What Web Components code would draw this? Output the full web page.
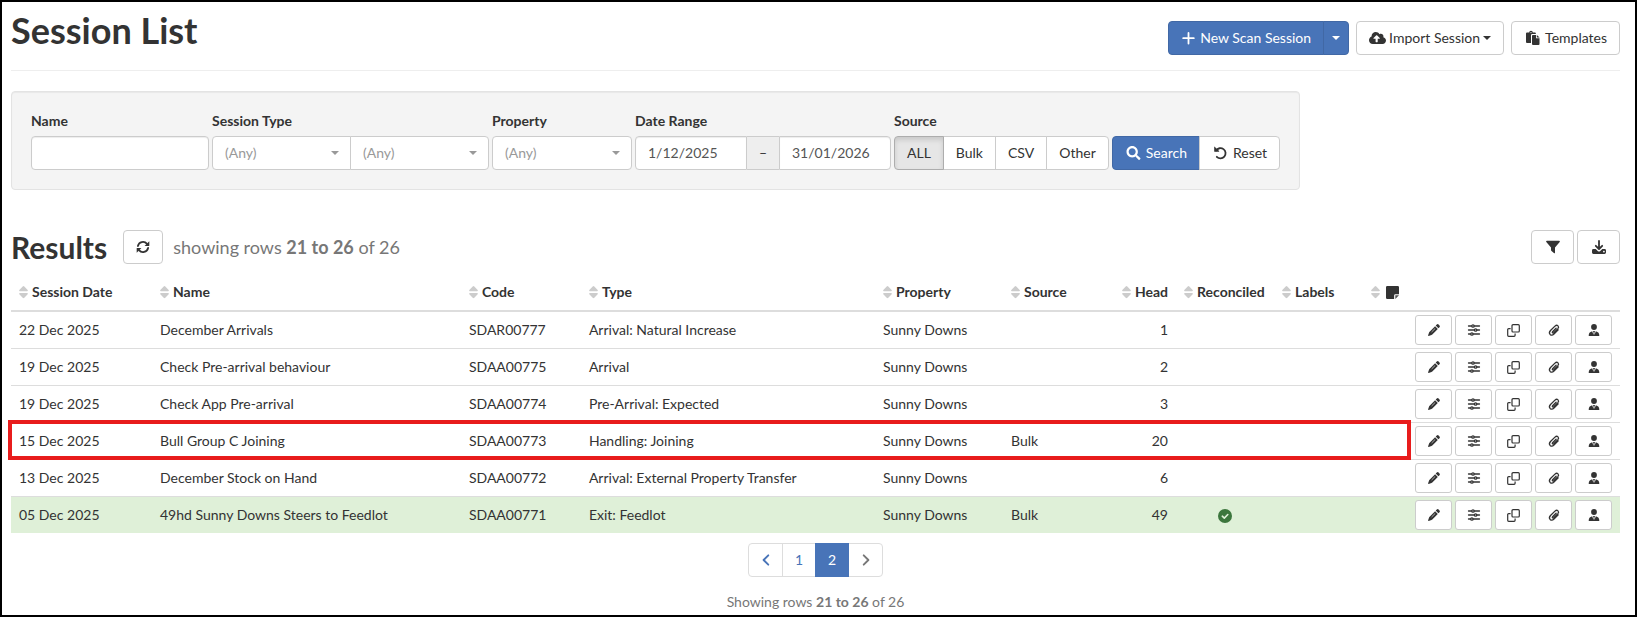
<!DOCTYPE html>
<html lang="en">
<head>
<meta charset="utf-8">
<meta name="viewport" content="width=device-width, initial-scale=1">
<title>Session List</title>
<style>
  body {
    margin: 0;
    font: 14px/20px Lato, "Liberation Sans", sans-serif;
    color: #333;
    background: #fff;
  }
</style>
</head>
<body>
<session-page>
  <page-header>
    Session List
    <button-group slot="actions">
      <ui-button variant="primary" edge="left"><ui-icon name="plus"></ui-icon>New Scan Session</ui-button>
      <ui-button variant="primary" edge="right" size="slim" label="More scan options"><ui-icon name="caret"></ui-icon></ui-button>
    </button-group>
    <ui-button slot="actions" tight><ui-icon name="cloud"></ui-icon>Import Session<ui-icon name="caret"></ui-icon></ui-button>
    <ui-button slot="actions"><ui-icon name="paste"></ui-icon>Templates</ui-button>
  </page-header>
  <filter-panel></filter-panel>
  <results-bar from="21" to="26" total="26"></results-bar>
  <session-table></session-table>
  <page-nav pages="2" current="2"></page-nav>
  <row-count from="21" to="26" total="26">Showing</row-count>
</session-page>

<script>
(() => {
  // [width, height, viewBox, markup]
  const ICONS = {
    plus: [15, 14, '1 0 15 14', '<path d="M8.500 2v10.500M3.200 7.200h10.600" fill="none" stroke="currentColor" stroke-width="1.800" stroke-linecap="round"/>'],
    caret: [8, 4, '0 0 8 4', '<path d="M0 0h8L4 4z"/>'],
    cloud: [17, 14, '0 0 640 512', '<path fill-rule="evenodd" d="M537.600 226.600c4.100-10.700 6.400-22.400 6.400-34.600 0-53-43-96-96-96-19.700 0-38.100 6-53.300 16.200C367 64.200 315.300 32 256 32c-88.400 0-160 71.600-160 160 0 2.700.1 5.400.2 8.100C40.200 219.800 0 273.200 0 336c0 79.500 64.500 144 144 144h368c70.700 0 128-57.300 128-128 0-61.900-44-113.600-102.400-125.400zM393.400 288H328v112c0 8.800-7.200 16-16 16h-48c-8.800 0-16-7.200-16-16V288h-65.400c-14.300 0-21.400-17.200-11.300-27.300l105.400-105.400c6.200-6.200 16.400-6.200 22.600 0l105.400 105.400c10.100 10.100 2.900 27.300-11.300 27.300z"/>'],
    paste: [17, 14, '0 0 17 14', '<path d="M3 1.500h2.200a1.800 1.800 0 0 1 3.600 0H11q.8 0 .8.800V3H8.200Q7 3 7 4.300V12H3q-1 0-1-1V2.500q0-1 1-1z"/><circle cx="7" cy="1.600" r=".6" fill="#fff"/><path d="M8.800 4H12v3.200h3.500V13q0 1-1 1H9q-1 0-1-1V4.900q0-.9.800-.9z"/><path d="M12.800 3.900l2.800 2.600h-2.800z"/>'],
    search: [17, 14, '0 0 512 512', '<path d="M505 442.700L405.300 343c-4.500-4.500-10.600-7-17-7H372c27.600-35.300 44-79.700 44-128C416 93.100 322.900 0 208 0S0 93.100 0 208s93.100 208 208 208c48.300 0 92.700-16.400 128-44v16.300c0 6.400 2.500 12.500 7 17l99.700 99.700c9.400 9.400 24.600 9.400 33.900 0l28.300-28.300c9.400-9.400 9.400-24.600.1-34zM208 336c-70.700 0-128-57.200-128-128 0-70.700 57.200-128 128-128 70.700 0 128 57.200 128 128 0 70.700-57.200 128-128 128z"/>'],
    undo: [17, 14, '0 0 14 14', '<path d="M2.600 4.600A5.100 5.100 0 1 1 3.300 10.800" fill="none" stroke="currentColor" stroke-width="1.800" stroke-linecap="round"/><path d="M.7.900q0-.6.5-.2L5.600 5q.4.700-.3.800H1.300q-.6 0-.6-.6z"/>'],
    sync: [14, 14, '0 0 14 14', '<g fill="none" stroke="currentColor" stroke-width="1.800" stroke-linecap="round"><path d="M1.900 6A5.200 5.200 0 0 1 11 3.900"/><path d="M12.100 8A5.200 5.200 0 0 1 3 10.100"/></g><path d="M13.300 1.200v4.200q0 .5-.5.500H8.600z"/><path d="M.7 12.800V8.600q0-.5.500-.5h4.200z"/>'],
    filter: [18, 14, '0 0 18 14', '<path d="M2.800.8h12.400q1.200.3.500 1.300L11 7.500v5.200q-.3.900-1.100.4L7.500 11q-.5-.4-.5-1V7.500L2.300 2.100Q1.600 1 2.800.8z"/>'],
    download: [18, 14, '0 0 18 14', '<path d="M9 1v7.500M5.800 5.800L9 9l3.200-3.200" fill="none" stroke="currentColor" stroke-width="1.800" stroke-linecap="round" stroke-linejoin="round"/><path fill-rule="evenodd" d="M3.400 9h2.300L8 11.200q1 .8 2 0L12.300 9h2.300q1.400 0 1.400 1.400v2.200q0 1.400-1.400 1.400H3.400Q2 14 2 12.600v-2.200Q2 9 3.400 9zm10.500 1.800a.8.8 0 1 0 .01 0z"/>'],
    sort: [9, 12, '0 0 9 12', '<path d="M4.500 0Q5 0 5.300.4L8.700 4q.6 1-.5 1.200H.8Q-.3 5 .3 4L3.700.4Q4 0 4.500 0zM4.500 12.200q.5 0 .8-.4L8.700 8.200q.6-1-.5-1.200H.8q-1.100.2-.5 1.200l3.400 3.600q.3.400.8.400z"/>'],
    note: [13, 13, '0 0 12 12', '<path d="M1.200 0h9.600Q12 0 12 1.200V7.500H8.700q-1.200 0-1.200 1.200V12H1.200Q0 12 0 10.800V1.200Q0 0 1.200 0z"/><path d="M8.600 8.600H12L8.600 12z" opacity=".85"/>'],
    pencil: [12, 12, '0 0 12 12', '<path d="M8.800.5q.9-.9 1.800 0l.9.900q.9.900 0 1.800l-1.100 1.100L7.700 1.600zM7.100 2.200l2.700 2.700-5.500 5.500q-.4.400-.8.500L.6 11.900q-.6 0-.5-.6l1-2.900q.1-.4.500-.7z"/><path d="M3.900 7.700l3-3" stroke="#fff" stroke-width=".6" stroke-linecap="round"/>'],
    sliders: [12, 12, '0 0 12 12', '<g fill="none" stroke="currentColor" stroke-width="1.300" stroke-linecap="round"><path d="M.5 2h3M6.400 2h5.100M.5 6h5.600M9 6h2.500M.5 10h1.900M5.300 10h6.200"/><circle cx="5" cy="2" r="1.200"/><circle cx="7.600" cy="6" r="1.200"/><circle cx="3.900" cy="10" r="1.200"/></g>'],
    copy: [13, 13, '0 0 13 13', '<g fill="none" stroke="currentColor" stroke-width="1.200"><rect x="5" y=".7" width="7.300" height="7.300" rx="1"/><path d="M3.600 4.600H1.700q-1 0-1 1v5.700q0 1 1 1h5.400q1 0 1-1V9.600"/></g>'],
    clip: [12, 12, '0 0 12 12', '<path d="M8.100 4.200L4.600 7.700q-.7.900.1 1.300.5.200 1-.2l4.200-4.200q1.300-1.500.1-2.700-1.300-1.300-2.800 0L2.500 6.500q-2 2.200-.4 3.900 1.800 1.600 3.900-.3l4.200-4.200" fill="none" stroke="currentColor" stroke-width="1.300" stroke-linecap="round"/>'],
    user: [12, 12, '0 0 12 12', '<circle cx="6" cy="3" r="2.900"/><path d="M.7 11.900q-.2-3.800 3.500-4.700L5.500 11l.1-2.300L5 7.100h2l-.6 1.600.1 2.300 1.300-3.800q3.700.9 3.500 4.700z"/>'],
    check: [14, 14, '0 0 14 14', '<circle cx="7" cy="7" r="7"/><path d="M4.300 7.200l2 1.900 3.500-3.600" fill="none" stroke="#dff0d8" stroke-width="1.600" stroke-linecap="round" stroke-linejoin="round"/>'],
    prev: [8, 12, '0 0 8 12', '<path d="M6.300 1.300L1.600 6l4.700 4.700" fill="none" stroke="currentColor" stroke-width="1.900" stroke-linecap="round" stroke-linejoin="round"/>'],
    next: [8, 12, '0 0 8 12', '<path d="M1.700 1.300L6.400 6l-4.700 4.700" fill="none" stroke="currentColor" stroke-width="1.900" stroke-linecap="round" stroke-linejoin="round"/>']
  };

  const SESSIONS = [
    ['22 Dec 2025', 'December Arrivals', 'SDAR00777', 'Arrival: Natural Increase', 'Sunny Downs', '', 1],
    ['19 Dec 2025', 'Check Pre-arrival behaviour', 'SDAA00775', 'Arrival', 'Sunny Downs', '', 2],
    ['19 Dec 2025', 'Check App Pre-arrival', 'SDAA00774', 'Pre-Arrival: Expected', 'Sunny Downs', '', 3],
    ['15 Dec 2025', 'Bull Group C Joining', 'SDAA00773', 'Handling: Joining', 'Sunny Downs', 'Bulk', 20, 'marked'],
    ['13 Dec 2025', 'December Stock on Hand', 'SDAA00772', 'Arrival: External Property Transfer', 'Sunny Downs', '', 6],
    ['05 Dec 2025', '49hd Sunny Downs Steers to Feedlot', 'SDAA00771', 'Exit: Feedlot', 'Sunny Downs', 'Bulk', 49, 'done']
  ];

  const ROW_ACTIONS = [
    ['pencil', 'Edit'], ['sliders', 'Settings'], ['copy', 'Duplicate'], ['clip', 'Attachments'], ['user', 'Assign']
  ];

  class BaseElement extends HTMLElement {
    constructor() {
      super();
      this.attachShadow({ mode: 'open' });
    }

    connectedCallback() {
      const template = document.createElement('template');
      template.innerHTML = this.render();
      this.shadowRoot.replaceChildren(template.content.cloneNode(true));
    }

    attr(name) {
      return this.getAttribute(name) || '';
    }
  }

  class UiIcon extends BaseElement {
    render() {
      const [width, height, box, markup] = ICONS[this.attr('name')];
      return `
      <style>
        :host { display: inline-flex; flex: none; }
        svg { display: block; fill: currentColor; overflow: visible; }
      </style>
      <svg width="${width}" height="${height}" viewBox="${box}" aria-hidden="true">${markup}</svg>`;
    }
  }

  // size: (default) | small | slim | icon | wide, edge: left | middle | right
  class UiButton extends BaseElement {
    render() {
      const label = this.attr('label');
      return `
      <style>
        :host { display: inline-flex; flex: none; }
        button {
          display: flex;
          align-items: center;
          justify-content: center;
          gap: 4px;
          box-sizing: border-box;
          height: 34px;
          margin: 0;
          padding: 0 12px;
          border: 1px solid #ccc;
          border-radius: 4px;
          background: #fff;
          color: #333;
          font: inherit;
          white-space: nowrap;
          cursor: pointer;
        }
        button:hover { background: #f5f5f5; }
        :host([tight]) button { gap: 3px; }
        :host([size="slim"]) button { width: 26px; padding: 0; }
        :host([size="icon"]) button { width: 40px; padding: 0; }
        :host([size="wide"]) button { width: 43px; padding: 0; }
        :host([size="small"]) button { width: 37px; height: 30px; padding: 0; border-radius: 3px; }
        :host([variant="primary"]) button { background: #4874b8; border-color: #4168a5; color: #fff; }
        :host([active]) button {
          position: relative;
          background: #e6e6e6;
          border-color: #adadad;
          box-shadow: inset 0 3px 5px rgba(0, 0, 0, .125);
        }
        :host([edge="left"]) button { border-radius: 4px 0 0 4px; }
        :host([edge="middle"]) button { border-radius: 0; }
        :host([edge="right"]) button { border-radius: 0 4px 4px 0; }
        :host([edge="middle"]), :host([edge="right"]) { margin-left: -1px; }
      </style>
      <button type="button"${label && ` aria-label="${label}"`}${this.hasAttribute('active') ? ' aria-pressed="true"' : ''}><slot></slot></button>`;
    }
  }

  class ButtonGroup extends BaseElement {
    render() {
      return `
      <style>:host { display: inline-flex; }</style>
      <slot></slot>`;
    }
  }

  class SessionPage extends BaseElement {
    render() {
      return `
      <style>
        :host {
          display: block;
          box-sizing: border-box;
          min-height: 100vh;
          padding: 0 15px 0 9px;
          border: 2px solid #000;
        }
      </style>
      <main><slot></slot></main>`;
    }
  }

  class PageHeader extends BaseElement {
    render() {
      return `
      <style>
        :host { display: block; }
        header {
          display: flex;
          justify-content: space-between;
          align-items: flex-end;
          border-bottom: 1px solid #eee;
        }
        h1 { margin: 8px 0 20px; font-size: 36px; line-height: 40px; font-weight: 700; }
        .actions { display: flex; gap: 7px; padding-bottom: 15px; }
      </style>
      <header>
        <h1><slot></slot></h1>
        <div class="actions"><slot name="actions"></slot></div>
      </header>`;
    }
  }

  class FilterPanel extends BaseElement {
    render() {
      return `
      <style>
        :host { display: block; margin-top: 20px; }
        form {
          display: flex;
          flex-wrap: wrap;
          align-items: flex-end;
          gap: 3px;
          box-sizing: border-box;
          width: fit-content;
          max-width: 100%;
          padding: 19px;
          border: 1px solid #e3e3e3;
          border-radius: 4px;
          background: #f4f4f4;
          box-shadow: inset 0 1px 1px rgba(0, 0, 0, .05);
        }
        label, .label { display: block; margin-bottom: 5px; font-weight: 700; }
        .line { display: flex; }
        input, select {
          appearance: none;
          box-sizing: border-box;
          height: 34px;
          margin: 0;
          padding: 0 12px;
          border: 1px solid #ccc;
          border-radius: 4px;
          background: #fff;
          color: #555;
          font: inherit;
          box-shadow: inset 0 1px 1px rgba(0, 0, 0, .075);
        }
        input { padding-bottom: 2px; }
        select { width: 140px; color: #999; box-shadow: none; }
        .name { width: 178px; }
        .date { width: 112px; }
        .select { position: relative; display: block; }
        .select::after {
          content: "";
          position: absolute;
          top: 15px;
          right: 12px;
          border: 4px solid transparent;
          border-top-color: #999;
          border-bottom: 0;
          pointer-events: none;
        }
        .select + .select { margin-left: -1px; }
        .pair select { width: 139px; }
        .first { border-radius: 4px 0 0 4px; }
        .last { border-radius: 0 4px 4px 0; }
        .dash {
          box-sizing: border-box;
          width: 32px;
          border: solid #ccc;
          border-width: 1px 0;
          background: #eee;
          line-height: 32px;
          text-align: center;
        }
      </style>
      <form>
        <div>
          <label for="name">Name</label>
          <input id="name" class="name" type="text">
        </div>
        <div>
          <label for="type">Session Type</label>
          <div class="line pair">
            <span class="select"><select id="type" class="first"><option>(Any)</option></select></span>
            <span class="select"><select class="last" aria-label="Session subtype"><option>(Any)</option></select></span>
          </div>
        </div>
        <div>
          <label for="property">Property</label>
          <span class="select"><select id="property"><option>(Any)</option></select></span>
        </div>
        <div>
          <label for="from">Date Range</label>
          <div class="line">
            <input id="from" class="date first" type="text" value="1/12/2025">
            <span class="dash">–</span>
            <input class="date last" type="text" value="31/01/2026" aria-label="Date range end">
          </div>
        </div>
        <div role="group" aria-labelledby="source">
          <span id="source" class="label">Source</span>
          <div class="line">
            <ui-button edge="left" active>ALL</ui-button>
            <ui-button edge="middle">Bulk</ui-button>
            <ui-button edge="middle">CSV</ui-button>
            <ui-button edge="right">Other</ui-button>
          </div>
        </div>
        <div class="line">
          <ui-button variant="primary" edge="left"><ui-icon name="search"></ui-icon>Search</ui-button>
          <ui-button edge="right"><ui-icon name="undo"></ui-icon>Reset</ui-button>
        </div>
      </form>`;
    }
  }

  class ResultsBar extends BaseElement {
    render() {
      return `
      <style>
        :host { display: flex; align-items: center; margin: 40px 0 10px; }
        h2 { margin: 0 16px 0 0; font-size: 30px; line-height: 34px; font-weight: 700; }
        .count { margin-left: 10px; color: #777; font-size: 18px; }
        .tools { display: flex; gap: 3px; margin-left: auto; }
      </style>
      <h2>Results</h2>
      <ui-button size="icon" label="Refresh"><ui-icon name="sync"></ui-icon></ui-button>
      <span class="count">showing rows <b>${this.attr('from')} to ${this.attr('to')}</b> of ${this.attr('total')}</span>
      <div class="tools">
        <ui-button size="wide" label="Filter"><ui-icon name="filter"></ui-icon></ui-button>
        <ui-button size="wide" label="Download"><ui-icon name="download"></ui-icon></ui-button>
      </div>`;
    }
  }

  class SessionTable extends BaseElement {
    head(text, css = '') {
      return `<th scope="col" class="${css}"><span class="sort"><ui-icon name="sort"></ui-icon>${text}</span></th>`;
    }

    row([date, name, code, type, property, source, head, state = '']) {
      const buttons = ROW_ACTIONS.map(([icon, label]) =>
        `<ui-button size="small" label="${label}"><ui-icon name="${icon}"></ui-icon></ui-button>`).join('');
      return `
      <tr class="${state}">
        <td>${date}${state === 'marked' ? '<span class="marker"></span>' : ''}</td>
        <td>${name}</td>
        <td>${code}</td>
        <td>${type}</td>
        <td>${property}</td>
        <td>${source}</td>
        <td class="number">${head}</td>
        <td class="tick">${state === 'done' ? '<ui-icon name="check"></ui-icon>' : ''}</td>
        <td></td>
        <td></td>
        <td><div class="buttons">${buttons}</div></td>
      </tr>`;
    }

    render() {
      return `
      <style>
        :host { display: block; }
        table { width: 100%; table-layout: fixed; border-spacing: 0; }
        th, td { text-align: left; vertical-align: middle; white-space: nowrap; }
        th { padding: 8px; border-bottom: 2px solid #ddd; }
        td { padding: 3px 8px; border-top: 1px solid #ddd; }
        tbody tr:first-child td { border-top: 0; }
        .sort { display: inline-flex; align-items: center; gap: 4px; vertical-align: top; }
        .sort ui-icon:first-child { color: #ccc; }
        .number { text-align: right; }
        .notes { padding-left: 0; text-align: right; }
        .notes .sort { gap: 6px; min-height: 20px; }
        .tick { text-align: center; color: #3c763d; }
        .tick ui-icon { vertical-align: middle; }
        .done td { background: #dff0d8; }
        .buttons { display: flex; gap: 3px; }
        .marked { position: relative; }
        .marker {
          position: absolute;
          inset: -2px 209px -1px -3px;
          border: 4px solid #e81c1c;
          pointer-events: none;
        }
        .c-date { width: 141px; }
        .c-name { width: 19.2%; }
        .c-code { width: 120px; }
        .c-property { width: 128px; }
        .c-source { width: 109px; }
        .c-head { width: 64px; }
        .c-reconciled { width: 98px; }
        .c-labels { width: 86px; }
        .c-notes { width: 47px; }
        .c-actions { width: 213px; }
      </style>
      <table>
        <colgroup>
          <col class="c-date"><col class="c-name"><col class="c-code"><col><col class="c-property"><col class="c-source">
          <col class="c-head"><col class="c-reconciled"><col class="c-labels"><col class="c-notes"><col class="c-actions">
        </colgroup>
        <thead>
          <tr>
            ${this.head('Session Date')}
            ${this.head('Name')}
            ${this.head('Code')}
            ${this.head('Type')}
            ${this.head('Property')}
            ${this.head('Source')}
            ${this.head('Head', 'number')}
            ${this.head('Reconciled')}
            ${this.head('Labels')}
            ${this.head('<ui-icon name="note"></ui-icon>', 'notes')}
            <th></th>
          </tr>
        </thead>
        <tbody>${SESSIONS.map(session => this.row(session)).join('')}</tbody>
      </table>`;
    }
  }

  class PageNav extends BaseElement {
    render() {
      const current = Number(this.attr('current'));
      const count = Number(this.attr('pages'));
      let pages = '';
      for (let i = 1; i <= count; i++) {
        pages += `<a href="#page-${i}"${i === current ? ' aria-current="page"' : ''}>${i}</a>`;
      }
      return `
      <style>
        :host { display: block; margin-top: 10px; }
        nav { display: flex; justify-content: center; }
        a {
          display: flex;
          align-items: center;
          justify-content: center;
          box-sizing: border-box;
          width: 35px;
          height: 34px;
          border: 1px solid #ddd;
          color: #4874b8;
          text-decoration: none;
        }
        a + a { width: 34px; margin-left: -1px; }
        a:first-child { border-radius: 4px 0 0 4px; }
        a:last-child { width: 35px; border-radius: 0 4px 4px 0; color: #777; }
        a[aria-current] { position: relative; background: #4874b8; border-color: #4874b8; color: #fff; }
      </style>
      <nav aria-label="Pages">
        <a href="#page-${current - 1}" aria-label="Previous"><ui-icon name="prev"></ui-icon></a>
        ${pages}
        <a href="#page-${current}" aria-label="Next"><ui-icon name="next"></ui-icon></a>
      </nav>`;
    }
  }

  class RowCount extends BaseElement {
    render() {
      return `
      <style>:host { display: block; margin-top: 15px; color: #777; text-align: center; }</style>
      <slot></slot> rows <b>${this.attr('from')} to ${this.attr('to')}</b> of ${this.attr('total')}`;
    }
  }

  customElements.define('ui-icon', UiIcon);
  customElements.define('ui-button', UiButton);
  customElements.define('button-group', ButtonGroup);
  customElements.define('session-page', SessionPage);
  customElements.define('page-header', PageHeader);
  customElements.define('filter-panel', FilterPanel);
  customElements.define('results-bar', ResultsBar);
  customElements.define('session-table', SessionTable);
  customElements.define('page-nav', PageNav);
  customElements.define('row-count', RowCount);
})();
</script>
</body>
</html>
